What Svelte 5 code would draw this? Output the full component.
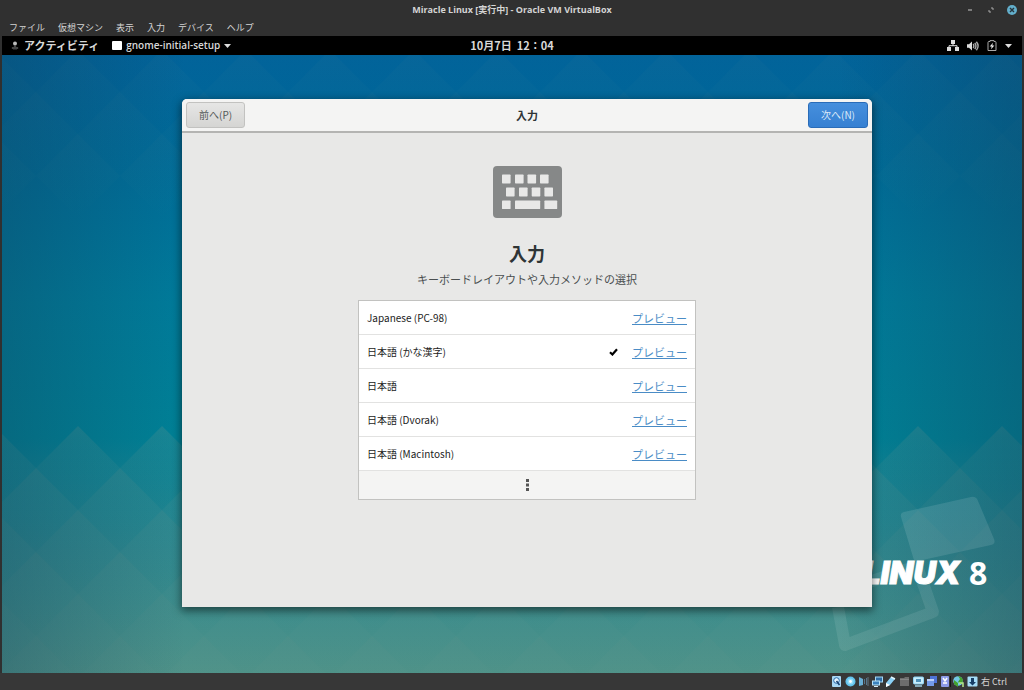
<script>
  const menus = ['ファイル', '仮想マシン', '表示', '入力', 'デバイス', 'ヘルプ'];
  const layouts = ['Japanese (PC-98)', '日本語 (かな漢字)', '日本語', '日本語 (Dvorak)', '日本語 (Macintosh)'];
  let selected = $state(1);

  const diamondW = 84;
  const stepY = 42;

  // Rows of overlapping diamonds: a faint band along the top, a stronger one at the bottom.
  const rows = [
    { top: -47, odd: true, o: 0.2 },
    { top: -5, odd: false, o: 0.25 },
    { top: 37, odd: true, o: 0.25 },
    { top: 79, odd: false, o: 0.25 },
    { top: 371, odd: false, o: 0.9 },
    { top: 413, odd: true, o: 0.9 },
    { top: 455, odd: false, o: 0.75 },
    { top: 497, odd: true, o: 0.65 },
    { top: 539, odd: false, o: 0.5 },
    { top: 581, odd: true, o: 0.4 }
  ];
  const diamonds = rows.flatMap((r) =>
    Array.from({ length: 15 }, (_, i) => {
      const x = 76 + (i - 1) * diamondW - (r.odd ? diamondW / 2 : 0);
      return {
        o: r.o,
        d: `M${x} ${r.top}l${diamondW / 2} ${stepY}l${-diamondW / 2} ${stepY}l${-diamondW / 2} ${-stepY}z`
      };
    })
  );
</script>

<div class="vm">
  <header class="titlebar">
    <span></span>
    <h1>Miracle Linux [実行中] - Oracle VM VirtualBox</h1>
    <div class="controls">
      <button aria-label="最小化"><svg width="10" height="10" viewBox="0 0 10 10"><path d="M3 5h4" stroke="#c8c8c8" /></svg></button>
      <button aria-label="最大化"><svg width="10" height="10" viewBox="0 0 10 10"><path d="M5 3h2v2M3 5v2h2" fill="none" stroke="#a8a8a8" /></svg></button>
      <button aria-label="閉じる"><svg width="10" height="10" viewBox="0 0 10 10"><circle cx="5" cy="5" r="5" fill="#62aecb" /><path d="M3 3l4 4M7 3l-4 4" stroke="#26343c" stroke-width="1.4" /></svg></button>
    </div>
  </header>

  <nav class="menubar">
    {#each menus as menu}<button>{menu}</button>{/each}
  </nav>

  <div class="panel">
    <div class="panel-left">
      <button class="activities">
        <svg width="8" height="10" viewBox="0 0 8 10"><circle cx="4" cy="2.5" r="2" fill="#bbb" /><path d="M3 4.5h2v1H3zM1 6.5h6v1H1zM2 8.3h4" fill="#666" stroke="#555" stroke-width=".5" /></svg>
        アクティビティ
      </button>
      <button class="appmenu">
        <svg width="10" height="9" viewBox="0 0 10 9"><rect width="10" height="9" rx="1" fill="#fff" /></svg>
        gnome-initial-setup
        <svg width="7" height="4" viewBox="0 0 7 4"><path d="M0 0h7L3.5 4z" fill="#ddd" /></svg>
      </button>
    </div>
    <button class="clock">10月7日&nbsp; 12：04</button>
    <button class="tray" aria-label="システム">
      <svg width="12" height="11" viewBox="0 0 12 11"><path d="M4 0h4v4H4zM0 7h4v4H0zM8 7h4v4H8z" fill="#ddd" /><path d="M6 4v2M2 7.5V5.7h8v1.8" fill="none" stroke="#ddd" /></svg>
      <svg width="12" height="10" viewBox="0 0 12 10"><path d="M0 3.2h2L5 .5v9L2 6.8H0z" fill="#ddd" /><path d="M6.2 3q1.3 2 0 4M7.8 1.8q2.3 3.2 0 6.4M9.4 .8q3.4 4.2 0 8.4" fill="none" stroke="#aaa" stroke-width="1.4" /></svg>
      <svg width="10" height="11" viewBox="0 0 10 11"><path d="M1 2.5q0-1 1-1h1V.6h4v.9h1q1 0 1 1v8H1z" fill="none" stroke="#aaa" /><path d="M6 2.8L2.7 6.4h2L4 9.2l3.4-3.8H5.3z" fill="#eee" /></svg>
      <svg width="7" height="4" viewBox="0 0 7 4"><path d="M0 0h7L3.5 4z" fill="#ddd" /></svg>
    </button>
  </div>

  <main class="desktop">
    <svg class="wallpaper" viewBox="0 0 1020 618" preserveAspectRatio="xMidYMid slice">
      <defs>
        <linearGradient id="sky" x1="0" y1="0" x2="0" y2="1">
          <stop offset="0" stop-color="#00629a" />
          <stop offset=".15" stop-color="#006a98" />
          <stop offset=".4" stop-color="#007b9a" />
          <stop offset=".62" stop-color="#008196" />
          <stop offset=".8" stop-color="#2c878e" />
          <stop offset="1" stop-color="#4f9288" />
        </linearGradient>
        <linearGradient id="edge">
          <stop offset="0" stop-color="#123c55" stop-opacity=".34" />
          <stop offset=".18" stop-color="#123c55" stop-opacity="0" />
          <stop offset=".82" stop-color="#123c55" stop-opacity="0" />
          <stop offset="1" stop-color="#123c55" stop-opacity=".34" />
        </linearGradient>
        <linearGradient id="facet" x1="0" y1="0" x2="0" y2="1">
          <stop offset="0" stop-color="#7d9c90" stop-opacity=".25" />
          <stop offset="1" stop-color="#4d9fa0" stop-opacity="0" />
        </linearGradient>
      </defs>
      <rect width="1020" height="618" fill="url(#sky)" />
      {#each diamonds as diamond}
        <path d={diamond.d} fill="url(#facet)" opacity={diamond.o} />
      {/each}
      <rect width="1020" height="618" fill="url(#edge)" />
      <path d="M902 457l67-15q5-1 7 4l16 38q2 5-3 6l-73 16q-4 1-5-4l-12-40q-1-4 3-5z" fill="#fff" opacity=".11" />
      <path d="M836 552l7 38 88-33-16-46-60 20" fill="none" stroke="#fff" stroke-width="12" stroke-linejoin="round" opacity=".09" />
      <text class="brand" x="861" y="529">LINUX</text>
      <text class="edition" x="967" y="530">8</text>
    </svg>

    <section class="window">
      <header class="headerbar">
        <button class="btn">前へ(P)</button>
        <h2>入力</h2>
        <button class="btn suggested">次へ(N)</button>
      </header>
      <div class="page">
        <svg width="69" height="52" viewBox="0 0 69 52">
          <rect width="69" height="52" rx="4" fill="#868888" />
          <g fill="#e8e8e7">
            {#each [9, 22, 34.5, 47] as x}<rect {x} y="8.5" width="8.6" height="9" rx=".7" />{/each}
            {#each [13, 26, 38.7, 51.4] as x}<rect {x} y="21.5" width="8.6" height="9" rx=".7" />{/each}
            <rect x="9" y="34.5" width="8.6" height="8.6" rx=".7" />
            <rect x="22" y="34.5" width="25.2" height="8.6" rx=".7" />
            <rect x="51.4" y="34.5" width="12.8" height="8.6" rx=".7" />
          </g>
        </svg>
        <h3>入力</h3>
        <p>キーボードレイアウトや入力メソッドの選択</p>
        <ul>
          {#each layouts as layout, i}
            <li>
              <button class="layout" onclick={() => (selected = i)}>
                <span>{layout}</span>
                {#if selected === i}
                  <svg width="9" height="8" viewBox="0 0 9 8"><path d="M1 4.3l2.4 2.2L8 1.2" fill="none" stroke="#000" stroke-width="2.2" /></svg>
                {/if}
              </button>
              <a href="#preview">プレビュー</a>
            </li>
          {/each}
          <li class="more">
            <button aria-label="その他">
              <svg width="3" height="12" viewBox="0 0 3 12"><path d="M0 0h3v3H0zM0 4.5h3v3H0zM0 9h3v3H0z" fill="#555" /></svg>
            </button>
          </li>
        </ul>
      </div>
    </section>
  </main>

  <footer class="statusbar">
    <div class="devices">
      <svg viewBox="0 0 11 11"><rect x="1" width="9" height="11" rx="1" fill="#a9d8f5" /><circle cx="5.5" cy="4.5" r="2.8" fill="#e8f6ff" stroke="#2768a8" /><path d="M5.5 5l3 4" stroke="#17406f" stroke-width="1.5" /></svg>
      <svg viewBox="0 0 11 11"><circle cx="5.5" cy="5.5" r="5" fill="#64c4ee" /><circle cx="5.5" cy="5.5" r="3" fill="#92ddf8" /><circle cx="5.5" cy="5.5" r="1.4" fill="#fff" /></svg>
      <svg viewBox="0 0 11 11"><path d="M1 1l4 2v6L1 10z" fill="#69aed5" /><path d="M6.5 3v5M8.5 2v7" stroke="#55748a" /><path d="M9 1h2v9H9z" fill="#4d565c" /></svg>
      <svg viewBox="0 0 11 11"><rect x="3.5" y="1" width="7" height="5" fill="#2e6ca5" stroke="#a4d9f7" /><rect x=".5" y="5" width="7" height="4" fill="#3b82bd" stroke="#b9e4fa" /><path d="M2 10.5h4" stroke="#d7edf7" /></svg>
      <svg viewBox="0 0 11 11"><path d="M1 7l5-6 4 2-5 6-4 2z" fill="#8ad0f6" /><path d="M1 7l4 2-4 2z" fill="#fff" /><path d="M6 1l4 2" stroke="#e5f7ff" stroke-width="1.5" /></svg>
      <svg viewBox="0 0 11 11"><path d="M1 2h4l1-1h4v9H1z" fill="#6d6d6d" /><path d="M1 3.5h9" stroke="#858585" /></svg>
      <svg viewBox="0 0 11 11"><rect x=".5" y="1" width="10" height="7" rx="1" fill="#c8edfb" stroke="#8dd3f4" /><rect x="3" y="3" width="5" height="3" fill="#4e91b8" /><path d="M2 10h7" stroke="#a5d8ed" stroke-width="1.4" /></svg>
      <svg viewBox="0 0 11 11"><rect x="4" y="0" width="7" height="7" fill="#4e72d5" /><rect x="1" y="3" width="7" height="7" fill="#759ce9" /><path d="M1 4h7" stroke="#d4e3ff" stroke-width="1.5" /></svg>
      <svg viewBox="0 0 11 11"><rect x="1" width="8" height="11" rx="1" fill="#8d9ce8" /><path d="M3 2l2 3 2-3M3 7h4" fill="none" stroke="#fff" stroke-width="1.5" /><path d="M10.5 0v11" stroke="#111" /></svg>
      <svg viewBox="0 0 11 11"><circle cx="5" cy="5" r="4.8" fill="#73c8e6" /><path d="M5 0q5 1 5 5L8 8 5 6l2-3zM1 4l4 3v4L1 8z" fill="#44a32e" /><path d="M6 7h4v4" fill="none" stroke="#b7e889" stroke-width="1.5" /></svg>
      <svg viewBox="0 0 11 11"><rect x=".5" y=".5" width="10" height="10" rx="1" fill="#a5dcf7" /><path d="M4 2h3v4h2L5.5 9.5 2 6h2z" fill="#173e66" /></svg>
    </div>
    <span>右 Ctrl</span>
  </footer>
</div>

<style>
  :global(body) {
    margin: 0;
    background: #2f2f2f;
  }
  .vm {
    display: flex;
    flex-direction: column;
    min-height: 100vh;
    box-sizing: border-box;
    padding: 0 2px;
    background: #303030;
    color: #d4d4d4;
    font-family: "Noto Sans CJK JP", sans-serif;
    font-size: 11px;
  }
  button {
    margin: 0;
    padding: 0;
    border: 0;
    background: none;
    color: inherit;
    font: inherit;
  }
  svg {
    display: block;
    flex: none;
  }
  h1, h2, h3, p, ul {
    margin: 0;
    padding: 0;
  }
  .titlebar {
    display: grid;
    grid-template-columns: 1fr auto 1fr;
    align-items: center;
    height: 20px;
  }
  h1 {
    font: 700 9px/20px "Open Sans", "Noto Sans CJK JP", sans-serif;
  }
  .controls {
    display: flex;
    justify-content: flex-end;
    gap: 11px;
    padding-right: 5px;
  }
  .menubar {
    display: flex;
    gap: 13px;
    height: 16px;
    padding-left: 7px;
    font-size: 9px;
    line-height: 14px;
  }
  .panel {
    display: grid;
    grid-template-columns: 1fr auto 1fr;
    align-items: center;
    height: 19px;
    background: #000;
    color: #d8d8d8;
    font-weight: 700;
    line-height: 17px;
  }
  .panel-left, .activities, .appmenu, .tray {
    display: flex;
    align-items: center;
  }
  .panel-left {
    gap: 13px;
    padding-left: 9px;
  }
  .activities {
    gap: 5px;
  }
  .appmenu {
    gap: 4px;
    font-family: "Open Sans", sans-serif;
    font-size: 10px;
    font-weight: 600;
  }
  .tray {
    justify-content: flex-end;
    gap: 8px;
    padding-right: 10px;
  }
  .desktop {
    position: relative;
    flex: 1;
    overflow: hidden;
    padding: 44px 0 66px;
    background: #007b9a;
  }
  .wallpaper {
    position: absolute;
    inset: 0;
    width: 100%;
    height: 100%;
  }
  .brand {
    fill: #fff;
    stroke: #fff;
    stroke-width: 1px;
    font: italic 900 31px Inter, sans-serif;
  }
  .edition {
    fill: #fff;
    font: 700 32px "Open Sans", sans-serif;
  }
  .window {
    position: relative;
    left: 15px;
    width: 690px;
    max-width: 100%;
    margin: 0 auto;
    border-radius: 5px 5px 0 0;
    background: #e8e8e7;
    box-shadow: 0 3px 9px 1px rgba(0, 0, 0, 0.5);
    color: #2e3436;
  }
  .headerbar {
    display: grid;
    grid-template-columns: 1fr auto 1fr;
    align-items: center;
    height: 34px;
    box-sizing: border-box;
    padding: 0 4px;
    border-bottom: 2px solid #b4b4b2;
    border-radius: 5px 5px 0 0;
    background: #f4f4f3;
  }
  h2 {
    font-size: 11px;
    line-height: 24px;
  }
  .btn {
    justify-self: start;
    height: 26px;
    padding: 0 12px;
    border: 1px solid #c2c2c0;
    border-radius: 3px;
    background: linear-gradient(#e6e6e5, #d5d5d3);
    color: #55595a;
    font-size: 10px;
    line-height: 24px;
  }
  .suggested {
    justify-self: end;
    border-color: #2a6cb8;
    background: linear-gradient(#468fdd, #3680d2);
    color: #dceaf8;
  }
  .page {
    display: flex;
    flex-direction: column;
    align-items: center;
    padding: 33px 16px 107px;
  }
  h3 {
    margin-top: 21px;
    font-size: 18px;
    line-height: 28px;
  }
  p {
    margin-top: 3px;
    color: #4a4f50;
    line-height: 18px;
  }
  ul {
    width: 336px;
    margin-top: 12px;
    border: 1px solid #c2c2c0;
    background: #fff;
    color: #1c1c1c;
    list-style: none;
  }
  li {
    display: flex;
    align-items: center;
    gap: 14px;
    height: 33px;
    padding: 0 8px;
    border-bottom: 1px solid #e2e2e1;
  }
  .layout {
    display: flex;
    flex: 1;
    align-items: center;
    justify-content: space-between;
    height: 100%;
    font-size: 10px;
    text-align: left;
  }
  a {
    color: #4a8cc6;
  }
  .more {
    justify-content: center;
    height: 28px;
    border-bottom: 0;
    background: #f4f4f3;
  }
  .statusbar {
    display: flex;
    align-items: center;
    justify-content: flex-end;
    gap: 3px;
    height: 17px;
    margin: 0 -2px;
    padding-right: 17px;
    background: #373737;
    font-size: 9px;
    line-height: 16px;
  }
  .devices {
    display: flex;
    justify-content: space-between;
    width: 147px;
  }
  .devices svg {
    width: 11px;
    height: 11px;
  }
</style>
